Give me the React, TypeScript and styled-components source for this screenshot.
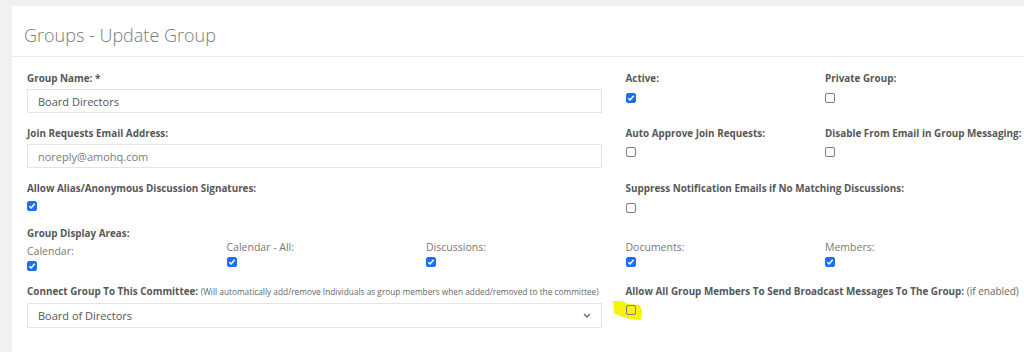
import React from 'react';
import styled, { createGlobalStyle } from 'styled-components';

const GlobalStyle = createGlobalStyle`
  body {
    margin: 0;
    background: #f1f1f1;
    font-family: 'Open Sans', 'Liberation Sans', sans-serif;
  }
`;

const Page = styled.div`
  padding: 6px 0 0 12px;
  height: 346px;
  overflow: hidden;
`;

const Card = styled.div`
  background: #ffffff;
  height: 100%;
`;

const Header = styled.div`
  height: 51px;
  padding: 17px 0 0 12px;
  box-sizing: border-box;
  border-bottom: 1px solid #ececec;
`;

const Title = styled.h1`
  margin: 0;
  font-size: 18px;
  line-height: 24px;
  font-weight: 300;
  color: #7a7a7a;
`;

const Form = styled.div`
  display: grid;
  grid-template-columns: repeat(5, 176px);
  column-gap: 23.5px;
  row-gap: 13px;
  padding: 14px 0 0 15px;
`;

const Field = styled.div<{ $span?: number; $top?: number }>`
  grid-column: span ${(p) => p.$span || 1};
  padding-top: ${(p) => p.$top || 0}px;
  position: relative;
  white-space: nowrap;
`;

const Label = styled.div`
  font-size: 9.9px;
  line-height: 14px;
  font-weight: 700;
  color: #575757;
`;

const Note = styled.span<{ $size?: number }>`
  font-size: ${(p) => p.$size || 8.3}px;
  font-weight: 400;
  color: #666;
`;

const SubLabel = styled.div<{ $gap?: number }>`
  margin-top: ${(p) => p.$gap || 0}px;
  font-size: 10.5px;
  line-height: 14px;
  color: #777;
`;

const TextBox = styled.div<{ $muted?: boolean }>`
  margin-top: 4px;
  height: 24px;
  box-sizing: border-box;
  border: 1px solid #e4e4e4;
  padding: 0 10px;
  display: flex;
  align-items: center;
  font-size: 11px;
  color: ${(p) => (p.$muted ? '#7a7a7a' : '#555')};
`;

const SelectBox = styled(TextBox)`
  height: 25px;
  justify-content: space-between;
  padding-right: 10px;
`;

const Box = styled.span<{ $on?: boolean; $gap?: number }>`
  position: relative;
  display: flex;
  align-items: center;
  justify-content: center;
  margin-top: ${(p) => (p.$gap === undefined ? 7 : p.$gap)}px;
  width: 10px;
  height: 10px;
  box-sizing: border-box;
  border-radius: 2px;
  background: ${(p) => (p.$on ? '#1a6ff5' : 'transparent')};
  border: 1px solid ${(p) => (p.$on ? '#1a6ff5' : '#7c7c7c')};
`;

const Marker = styled.svg`
  position: absolute;
  left: -13px;
  top: 17px;
`;

const Check = ({ on, gap }: { on?: boolean; gap?: number }) => (
  <Box $on={on} $gap={gap}>
    {on && (
      <svg width="8" height="8" viewBox="0 0 8 8">
        <path d="M1.3 4.2 L3.1 6 L6.7 1.8" fill="none" stroke="#fff" strokeWidth="1.5" />
      </svg>
    )}
  </Box>
);

export default function App() {
  return (
    <>
      <GlobalStyle />
      <Page>
        <Card>
          <Header>
            <Title>Groups - Update Group</Title>
          </Header>
          <Form>
            <Field $span={3}>
              <Label>Group Name: *</Label>
              <TextBox>Board Directors</TextBox>
            </Field>
            <Field>
              <Label>Active:</Label>
              <Check on gap={8} />
            </Field>
            <Field>
              <Label>Private Group:</Label>
              <Check gap={8} />
            </Field>

            <Field $span={3}>
              <Label>Join Requests Email Address:</Label>
              <TextBox $muted>noreply@amohq.com</TextBox>
            </Field>
            <Field>
              <Label>Auto Approve Join Requests:</Label>
              <Check />
            </Field>
            <Field>
              <Label>Disable From Email in Group Messaging:</Label>
              <Check />
            </Field>

            <Field $span={3}>
              <Label>Allow Alias/Anonymous Discussion Signatures:</Label>
              <Check on gap={6} />
            </Field>
            <Field $span={2}>
              <Label>Suppress Notification Emails if No Matching Discussions:</Label>
              <Check gap={8} />
            </Field>

            <Field>
              <Label>Group Display Areas:</Label>
              <SubLabel $gap={4}>Calendar:</SubLabel>
              <Check on gap={3} />
            </Field>
            <Field $top={14}>
              <SubLabel>Calendar - All:</SubLabel>
              <Check on gap={3} />
            </Field>
            <Field $top={14}>
              <SubLabel>Discussions:</SubLabel>
              <Check on gap={3} />
            </Field>
            <Field $top={14}>
              <SubLabel>Documents:</SubLabel>
              <Check on gap={3} />
            </Field>
            <Field $top={14}>
              <SubLabel>Members:</SubLabel>
              <Check on gap={3} />
            </Field>

            <Field $span={3}>
              <Label>
                Connect Group To This Committee:{' '}
                <Note>(Will automatically add/remove Individuals as group members when added/removed to the committee)</Note>
              </Label>
              <SelectBox>
                Board of Directors
                <svg width="8" height="5" viewBox="0 0 8 5">
                  <path d="M1 1 L4 4 L7 1" fill="none" stroke="#666" strokeWidth="1.4" />
                </svg>
              </SelectBox>
            </Field>
            <Field $span={2}>
              <Label>
                Allow All Group Members To Send Broadcast Messages To The Group: <Note $size={10}>(if enabled)</Note>
              </Label>
              <Marker width="30" height="20" viewBox="0 0 30 20">
                <polygon points="0,0 9,0 15,3 27,4 29,10 28,19 17,18 7,15 1,12" fill="#f6f40c" />
              </Marker>
              <Check gap={7} />
            </Field>
          </Form>
        </Card>
      </Page>
    </>
  );
}
